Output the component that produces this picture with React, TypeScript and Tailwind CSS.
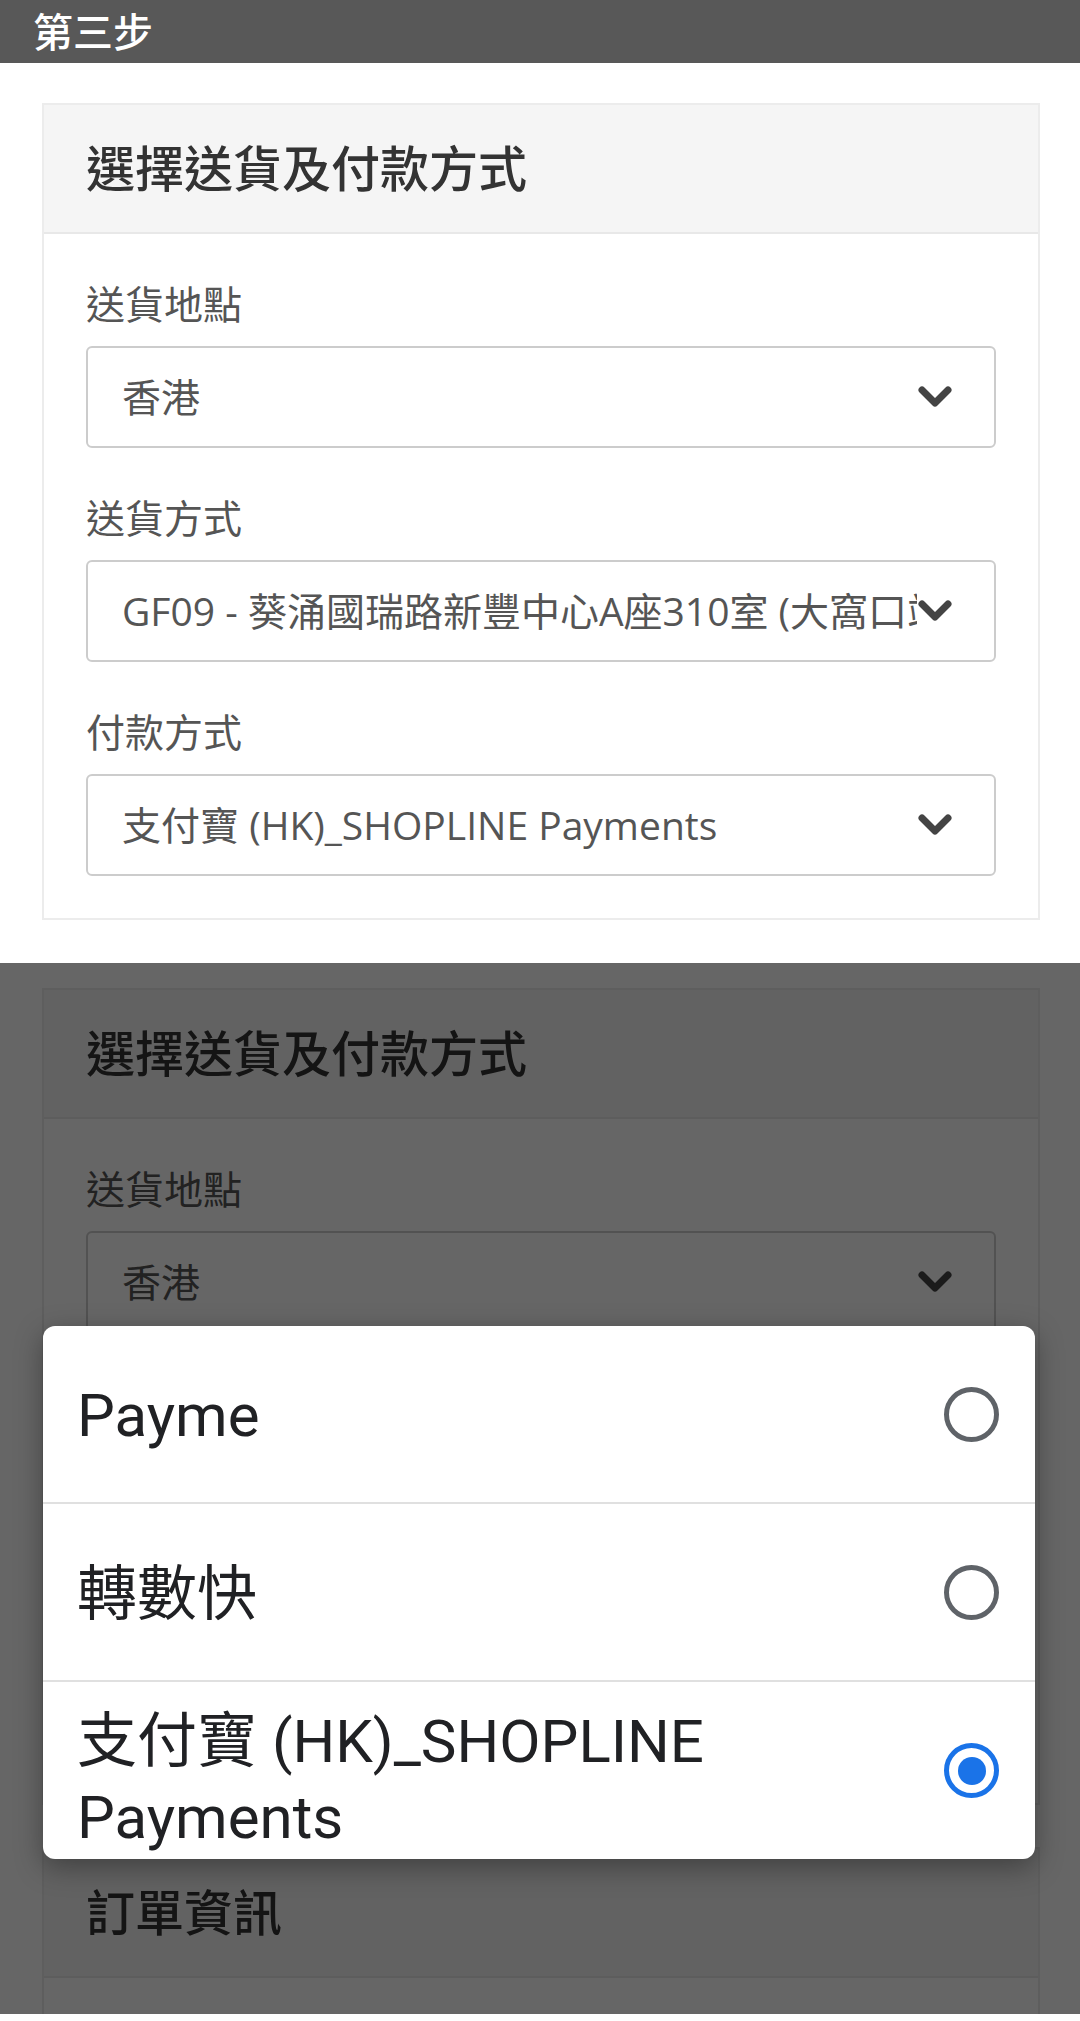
import React from "react";

const Chevron = () => (
  <svg width="36" height="24" viewBox="0 0 36 24" className="shrink-0">
    <polyline
      points="5,5 18,18 31,5"
      fill="none"
      stroke="#444444"
      strokeWidth="7"
      strokeLinecap="round"
      strokeLinejoin="round"
    />
  </svg>
);

const Field = ({ label, value }: { label: string; value: string }) => (
  <div className="flex flex-col">
    <div className="text-[39px] leading-[57px] text-[#555555] mb-[14px]">{label}</div>
    <div className="h-[102px] border-2 border-[#cccccc] rounded-[6px] bg-white flex items-center pl-[34px] pr-[41px]">
      <span className="flex-1 overflow-hidden whitespace-nowrap text-[39px] text-[#555555]">{value}</span>
      <Chevron />
    </div>
  </div>
);

const CardHeader = ({ title }: { title: string }) => (
  <div className="h-[129px] bg-[#f5f5f5] border-b-2 border-[#e8e8e8] flex items-center pl-[42px]">
    <h2 className="text-[49px] font-medium text-[#333333]">{title}</h2>
  </div>
);

const ShippingCard = () => (
  <div className="ml-[42px] mr-[40px] border-2 border-[#ececec] bg-white">
    <CardHeader title="選擇送貨及付款方式" />
    <div className="px-[42px] pt-[41px] pb-[42px] flex flex-col gap-[41px]">
      <Field label="送貨地點" value="香港" />
      <Field label="送貨方式" value="GF09 - 葵涌國瑞路新豐中心A座310室 (大窩口站 A出口)" />
      <Field label="付款方式" value="支付寶 (HK)_SHOPLINE Payments" />
    </div>
  </div>
);

const Radio = ({ checked }: { checked?: boolean }) =>
  checked ? (
    <div className="w-[55px] h-[55px] shrink-0 rounded-full border-[5px] border-[#1a73e8] flex items-center justify-center">
      <div className="w-[28px] h-[28px] rounded-full bg-[#1a73e8]" />
    </div>
  ) : (
    <div className="w-[55px] h-[55px] shrink-0 rounded-full border-[5px] border-[#5f6368]" />
  );

export default function App() {
  return (
    <div className="w-[1080px] bg-white font-['Open_Sans','Noto_Sans_CJK_TC',sans-serif]">
      {/* Step bar */}
      <div className="h-[63px] bg-[#585858] flex items-center pl-[33px]">
        <span className="text-[40px] font-medium text-white leading-none">第三步</span>
      </div>

      {/* Page before picker */}
      <div className="pt-[40px] pb-[43px]">
        <ShippingCard />
      </div>

      {/* Page with native picker open */}
      <div className="relative h-[1051px] overflow-hidden bg-white">
        <div className="pt-[25px]">
          <ShippingCard />
          <div className="mt-[42px] ml-[42px] mr-[40px] border-2 border-[#ececec] bg-white">
            <CardHeader title="訂單資訊" />
            <div className="h-[400px]" />
          </div>
        </div>

        <div className="absolute inset-0 bg-black/60" />

        <div className="absolute top-[363px] left-[43px] w-[992px] bg-white rounded-[12px] overflow-hidden shadow-[0_8px_28px_rgba(0,0,0,0.35)] font-['Roboto','Noto_Sans_CJK_TC',sans-serif]">
          <div className="min-h-[178px] flex items-center pl-[34px] pr-[36px] gap-[40px] border-b-2 border-[#e0e0e0]">
            <span className="flex-1 pt-[4px] text-[60px] leading-[76px] text-[#202124]">Payme</span>
            <Radio />
          </div>
          <div className="min-h-[178px] flex items-center pl-[34px] pr-[36px] gap-[40px] border-b-2 border-[#e0e0e0]">
            <span className="flex-1 pt-[6px] text-[60px] leading-[76px] text-[#202124]">轉數快</span>
            <Radio />
          </div>
          <div className="min-h-[177px] flex items-center pl-[34px] pr-[36px] gap-[40px]">
            <span className="flex-1 pt-[18px] text-[60px] leading-[76px] text-[#202124]">
              支付寶 (HK)_SHOPLINE Payments
            </span>
            <Radio checked />
          </div>
        </div>
      </div>
      <div className="h-[6px] bg-white" />
    </div>
  );
}
